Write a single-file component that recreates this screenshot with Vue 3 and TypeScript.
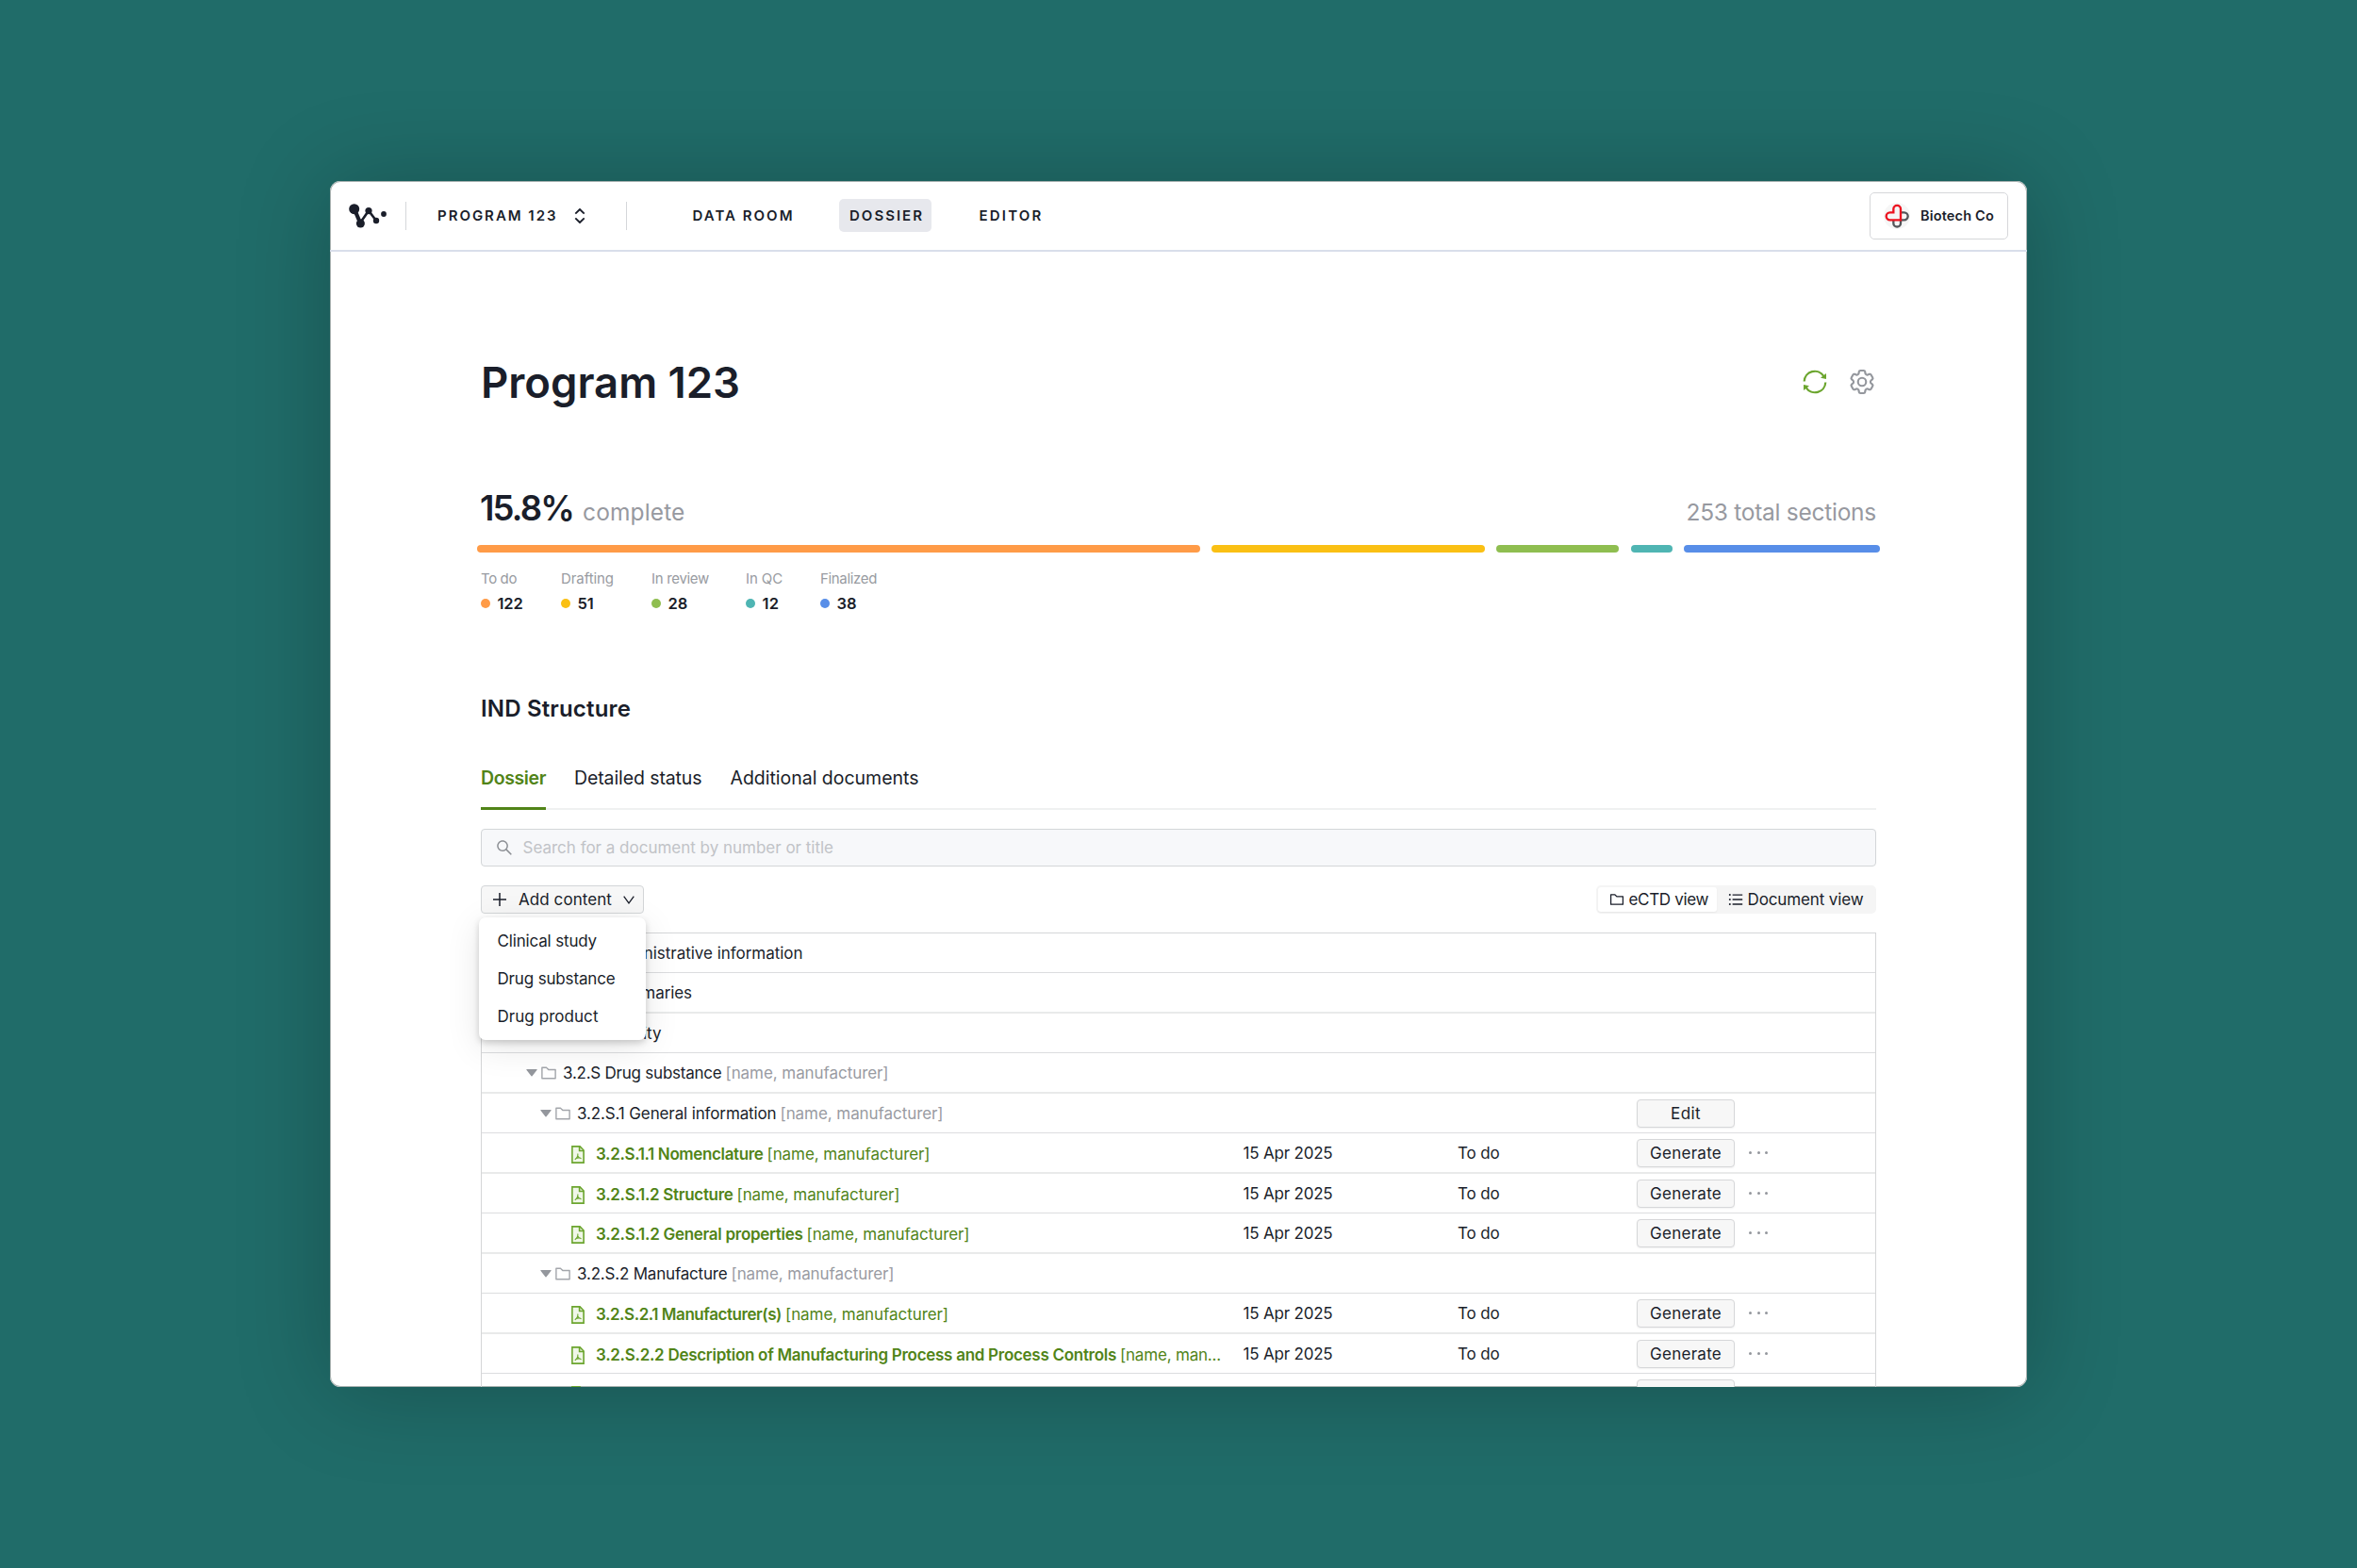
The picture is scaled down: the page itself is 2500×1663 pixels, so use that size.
<script setup lang="ts">
import type { Directive } from 'vue'

/** Tracks a text run so that it takes up the given width in pixels. */
const vTrack: Directive<HTMLElement, number | undefined> = {
  mounted(el, { value }) {
    const count = el.textContent?.length ?? 0
    if (!value || !count) return
    const range = document.createRange()
    range.selectNodeContents(el)
    const natural = range.getBoundingClientRect().width
    el.style.letterSpacing = `${(value - natural) / count}px`
  },
}

interface Status {
  label: string
  count: number
  color: string
  bar: number
  labelWidth: number
  countWidth: number
  column: number
}

interface Row {
  kind: 'module' | 'folder' | 'doc'
  level: number
  title: string
  width: number
  suffix?: string
  suffixWidth?: number
  action?: 'Edit' | 'Generate'
}

const statuses: Status[] = [
  { label: 'To do', count: 122, color: '#ff9b47', bar: 766.5, labelWidth: 38, countWidth: 27, column: 85 },
  { label: 'Drafting', count: 51, color: '#fac014', bar: 290, labelWidth: 56, countWidth: 17, column: 96 },
  { label: 'In review', count: 28, color: '#8fbe50', bar: 130.5, labelWidth: 61, countWidth: 21, column: 100 },
  { label: 'In QC', count: 12, color: '#4fb5b3', bar: 44, labelWidth: 39, countWidth: 18, column: 79 },
  { label: 'Finalized', count: 38, color: '#588ee8', bar: 208, labelWidth: 60, countWidth: 21, column: 80 },
]

const menu = [
  { label: 'Clinical study', width: 105.5 },
  { label: 'Drug substance', width: 125 },
  { label: 'Drug product', width: 107 },
]

const suffix = '[name, manufacturer]'

const rows: Row[] = [
  { kind: 'module', level: 0, title: 'Module 1 Administrative information', width: 286 },
  { kind: 'module', level: 0, title: 'Module 2 Summaries', width: 168.5 },
  { kind: 'module', level: 0, title: 'Module 3 Quality', width: 136 },
  { kind: 'folder', level: 2, title: '3.2.S Drug substance', width: 168.5, suffix, suffixWidth: 173 },
  { kind: 'folder', level: 3, title: '3.2.S.1 General information', width: 211.5, suffix, suffixWidth: 173, action: 'Edit' },
  { kind: 'doc', level: 4, title: '3.2.S.1.1 Nomenclature', width: 177.5, suffix, suffixWidth: 173, action: 'Generate' },
  { kind: 'doc', level: 4, title: '3.2.S.1.2 Structure', width: 145.5, suffix, suffixWidth: 173, action: 'Generate' },
  { kind: 'doc', level: 4, title: '3.2.S.1.2 General properties', width: 219.5, suffix, suffixWidth: 173, action: 'Generate' },
  { kind: 'folder', level: 3, title: '3.2.S.2 Manufacture', width: 159.5, suffix, suffixWidth: 173 },
  { kind: 'doc', level: 4, title: '3.2.S.2.1 Manufacturer(s)', width: 197, suffix, suffixWidth: 173, action: 'Generate' },
  { kind: 'doc', level: 4, title: '3.2.S.2.2 Description of Manufacturing Process and Process Controls', width: 552, suffix: '[name, man...', suffixWidth: 107, action: 'Generate' },
  { kind: 'doc', level: 4, title: '3.2.S.2.3 Control of Materials', width: 230, suffix, suffixWidth: 173, action: 'Generate' },
]

const folderPath =
  'M880 298.4H521L403.7 186.2a8.15 8.15 0 00-5.5-2.2H144c-17.7 0-32 14.3-32 32v592c0 17.7 14.3 32 32 32h736c17.7 0 32-14.3 32-32V330.4c0-17.7-14.3-32-32-32zM840 768H184V256h188.5l119.6 114.4H840V768z'
</script>

<template>
  <div class="stage">
    <div class="window">
      <header class="topbar">
        <svg class="logo" viewBox="0 0 40 26">
          <path class="link-a" d="M6 6 12.3 21" />
          <path class="link-b" d="M12.3 20 21 7.5 29 18" />
          <circle cx="5.7" cy="5.7" r="5.5" />
          <circle cx="12.4" cy="21" r="4.5" />
          <circle cx="21" cy="7.6" r="3.6" />
          <circle cx="29" cy="18" r="3.2" />
          <circle cx="37" cy="11" r="2.9" />
        </svg>
        <i class="rule rule-logo"></i>
        <span v-track="127.5" class="nav-text program">PROGRAM 123</span>
        <svg class="sorter" viewBox="0 0 12 16"><path d="M1.3 5.6 6 1l4.7 4.6M1.3 10.4 6 15l4.7-4.6" /></svg>
        <i class="rule rule-nav"></i>
        <nav>
          <span class="nav-item"><span v-track="108" class="nav-text">DATA ROOM</span></span>
          <span class="nav-item active"><span v-track="79" class="nav-text">DOSSIER</span></span>
          <span class="nav-item"><span v-track="68" class="nav-text">EDITOR</span></span>
        </nav>
        <button class="org">
          <svg class="org-logo" viewBox="354 104 84 84">
            <circle cx="396" cy="146" r="42" fill="#f6f6f6" />
            <path d="M408 135h11a12 12 0 0 1 0 24h-11M385 159v10a11.5 11.5 0 0 0 23 0v-10" stroke="#55565a" />
            <path d="M408 159V124a11.5 11.5 0 0 0-23 0v11h-11a12 12 0 0 0 0 24z" stroke="#ec1320" />
          </svg>
          <span v-track="78" class="org-name">Biotech Co</span>
        </button>
      </header>

      <main>
        <div class="title-row">
          <h1 v-track="275">Program 123</h1>
          <svg class="sync" viewBox="0 0 26 26">
            <path d="M1.7 12.5a11.2 11.2 0 0 1 20.6-5.6M24.3 13.5a11.2 11.2 0 0 1-20.6 5.6" />
            <path class="tip" d="M25 4v6l-6-1.3zM1 22v-6l6 1.3z" />
          </svg>
          <svg class="gear" viewBox="0 0 24 24">
            <path d="M9.594 3.94c.09-.542.56-.94 1.11-.94h2.593c.55 0 1.02.398 1.11.94l.213 1.281c.063.374.313.686.645.87.074.04.147.083.22.127.325.196.72.257 1.075.124l1.217-.456a1.125 1.125 0 0 1 1.37.49l1.296 2.247a1.125 1.125 0 0 1-.26 1.431l-1.003.827c-.293.241-.438.613-.43.992a7.723 7.723 0 0 1 0 .255c-.008.378.137.75.43.991l1.004.827c.424.35.534.955.26 1.43l-1.298 2.247a1.125 1.125 0 0 1-1.369.491l-1.217-.456c-.355-.133-.75-.072-1.076.124a6.47 6.47 0 0 1-.22.128c-.331.183-.581.495-.644.869l-.213 1.281c-.09.543-.56.94-1.11.94h-2.594c-.55 0-1.019-.398-1.11-.94l-.213-1.281c-.062-.374-.312-.686-.644-.87a6.52 6.52 0 0 1-.22-.127c-.325-.196-.72-.257-1.076-.124l-1.217.456a1.125 1.125 0 0 1-1.369-.49l-1.297-2.247a1.125 1.125 0 0 1 .26-1.431l1.004-.827c.292-.24.437-.613.43-.991a6.932 6.932 0 0 1 0-.255c.007-.38-.138-.751-.43-.992l-1.004-.827a1.125 1.125 0 0 1-.26-1.43l1.297-2.247a1.125 1.125 0 0 1 1.37-.491l1.216.456c.356.133.751.072 1.076-.124.072-.044.146-.086.22-.128.332-.183.582-.495.644-.869l.214-1.28Z" />
            <circle cx="12" cy="12" r="3.2" />
          </svg>
        </div>

        <div class="summary">
          <strong v-track="99" class="percent">15.8%</strong>
          <span v-track="108.5" class="muted">complete</span>
          <span v-track="201.5" class="muted total">253 total sections</span>
        </div>

        <div class="bars">
          <i v-for="s in statuses" :key="s.label" :style="{ width: s.bar + 'px', background: s.color }"></i>
        </div>

        <div class="legend">
          <div v-for="s in statuses" :key="s.label" :style="{ width: s.column + 'px' }">
            <span v-track="s.labelWidth" class="legend-label">{{ s.label }}</span>
            <span class="legend-value">
              <i :style="{ background: s.color }"></i>
              <b v-track="s.countWidth">{{ s.count }}</b>
            </span>
          </div>
        </div>

        <h2><span v-track="159">IND Structure</span></h2>

        <div class="tabs">
          <span class="tab current"><span v-track="69">Dossier</span></span>
          <span class="tab"><span v-track="135.5">Detailed status</span></span>
          <span class="tab"><span v-track="200">Additional documents</span></span>
        </div>

        <div class="search">
          <svg viewBox="0 0 1024 1024">
            <path d="M909.6 854.5L649.9 594.8C690.2 542.7 712 479 712 412c0-80.2-31.3-155.4-87.9-212.1-56.6-56.7-132-87.9-212.1-87.9s-155.5 31.3-212.1 87.9C143.2 256.5 112 331.8 112 412c0 80.1 31.3 155.5 87.9 212.1C256.5 680.8 331.8 712 412 712c67 0 130.6-21.8 182.7-62l259.7 259.6a8.2 8.2 0 0011.6 0l43.6-43.5a8.2 8.2 0 000-11.6zM570.4 570.4C528 612.7 471.8 636 412 636s-116-23.3-158.4-65.6C211.3 528 188 471.8 188 412s23.3-116.1 65.6-158.4C296 211.3 352.2 188 412 188s116.1 23.2 158.4 65.6S636 352.2 636 412s-23.3 116.1-65.6 158.4z" />
          </svg>
          <span v-track="329.5">Search for a document by number or title</span>
        </div>

        <div class="toolbar">
          <div class="add-wrap">
            <button class="add">
              <svg class="plus" viewBox="0 0 14 14"><path d="M7 0v14M0 7h14" /></svg>
              <span v-track="99">Add content</span>
              <svg class="down" viewBox="0 0 12 9"><path d="M.7.7 6 7.8 11.3.7" /></svg>
            </button>
            <div class="menu">
              <div v-for="m in menu" :key="m.label"><span v-track="m.width">{{ m.label }}</span></div>
            </div>
          </div>
          <div class="toggle">
            <span class="option selected">
              <svg viewBox="0 0 1024 1024"><path :d="folderPath" /></svg>
              <span v-track="84.5">eCTD view</span>
            </span>
            <span class="option">
              <svg viewBox="0 0 1024 1024">
                <path d="M320 192h600v72H320zM320 476h600v72H320zM320 760h600v72H320z" />
                <circle cx="160" cy="228" r="56" /><circle cx="160" cy="512" r="56" /><circle cx="160" cy="796" r="56" />
              </svg>
              <span v-track="123">Document view</span>
            </span>
          </div>
        </div>

        <div class="table">
          <div v-for="(r, i) in rows" :key="i" class="row">
            <div class="cell name" :class="[r.kind, 'level-' + r.level]">
              <template v-if="r.kind !== 'doc'">
                <svg class="caret" viewBox="0 0 12 8"><path d="M.8 0h10.4a.5.5 0 0 1 .4.8L6.5 7.2a.7.7 0 0 1-1 0L.4.8A.5.5 0 0 1 .8 0z" /></svg>
                <svg class="folder-icon" viewBox="0 0 1024 1024"><path :d="folderPath" /></svg>
              </template>
              <svg v-else class="file" viewBox="0 0 14 19">
                <path class="sheet" d="M.9.9h8.2l4 4.1v13.1H.9z" />
                <path d="M8.6.9v4.6h4.5" />
                <path class="pdf" d="M6.8 8.5c.5 2.3-.8 4.6-3 6.3M7 11.3c.8 1.5 2 2.2 3.6 2.5M4.8 13.6c1.8-.8 3.5-1 5-.4" />
              </svg>
              <span v-track="r.width" class="title">{{ r.title }}</span>
              <span v-if="r.suffix" v-track="r.suffixWidth" class="suffix">{{ r.suffix }}</span>
            </div>
            <div class="cell date"><span v-if="r.kind === 'doc'" v-track="95">15 Apr 2025</span></div>
            <div class="cell state"><span v-if="r.kind === 'doc'" v-track="44.5">To do</span></div>
            <div class="cell actions">
              <button v-if="r.action" class="action"><span v-track="r.action === 'Edit' ? 32 : 76">{{ r.action }}</span></button>
              <span v-if="r.kind === 'doc'" class="more"><i></i><i></i><i></i></span>
            </div>
          </div>
        </div>
      </main>
    </div>
  </div>
</template>

<style>
body {
  margin: 0;
  background: #206c69;
}
</style>

<style scoped>
* {
  box-sizing: border-box;
}
svg {
  display: block;
  flex: none;
  fill: none;
}
span,
strong {
  white-space: nowrap;
}
button {
  font: inherit;
  color: inherit;
  padding: 0;
}
.stage {
  width: 2500px;
  height: 1663px;
  padding: 192px 350px;
  overflow: hidden;
  background: #206c69;
  font-family: Inter, 'Liberation Sans', sans-serif;
  font-size: 17px;
  color: #1a1e2a;
}
.window {
  height: 1279px;
  overflow: hidden;
  border-radius: 11px;
  background: #fff;
  box-shadow: inset 0 0 0 1px #a9b2b1, 0 4px 100px rgba(0, 0, 0, 0.24);
}

.topbar {
  display: flex;
  align-items: center;
  height: 75px;
  padding: 0 20px;
  border-bottom: 2px solid #d9deea;
}
.logo {
  width: 40px;
  height: 26px;
  fill: #1a1e2a;
}
.link-a,
.link-b {
  fill: none;
  stroke: #1a1e2a;
}
.link-a {
  stroke-width: 4.2;
}
.link-b {
  stroke-width: 2.6;
}
.rule {
  width: 1px;
  height: 30px;
  background: #d5d7da;
}
.rule-logo {
  margin-left: 20px;
}
.rule-nav {
  margin-left: 43px;
}
.nav-text {
  display: block;
  font-size: 15px;
  font-weight: 600;
  line-height: 21px;
}
.program {
  width: 127px;
  margin-left: 33px;
}
.sorter {
  width: 12px;
  height: 16px;
  margin-left: 18px;
  stroke: #1a1e2a;
  stroke-width: 1.9;
}
nav {
  display: flex;
  margin-left: 58.5px;
  gap: 39.5px;
}
.nav-item {
  height: 35px;
  padding: 7px 8px 0 11px;
  border-radius: 5px;
}
.nav-item.active {
  background: #e7e8ed;
}
.org {
  display: flex;
  align-items: center;
  width: 147px;
  height: 50px;
  margin-left: auto;
  padding-left: 14px;
  border: 1px solid #d6d7da;
  border-radius: 5px;
  background: #fff;
}
.org-logo {
  width: 28px;
  height: 28px;
  stroke-width: 7;
}
.org-name {
  margin-left: 11px;
  font-size: 14.5px;
  font-weight: 600;
}

main {
  width: 1480px;
  margin: 0 160px;
}
.title-row {
  display: flex;
  align-items: center;
  height: 60px;
  margin-top: 109px;
}
h1 {
  flex: 1;
  margin: 0;
  font-size: 45.5px;
  font-weight: 600;
  line-height: 60px;
}
.sync {
  width: 26px;
  height: 26px;
  margin: -2px 21px 0 0;
  stroke: #6ba52e;
  stroke-width: 2.2;
}
.sync .tip {
  fill: #6ba52e;
  stroke: none;
}
.gear {
  width: 32px;
  height: 32px;
  margin: -2px -1px 0 0;
  stroke: #94979d;
  stroke-width: 1.6;
}

.summary {
  display: flex;
  align-items: baseline;
  height: 50px;
  margin-top: 78px;
}
.percent {
  width: 109px;
  margin-left: -1px;
  font-size: 36.5px;
  font-weight: 600;
  line-height: 50px;
}
.muted {
  font-size: 24.5px;
  color: #9799a0;
}
.total {
  margin-left: auto;
}

.bars {
  display: flex;
  gap: 12.2px;
  width: 1490px;
  margin: 14px -6px 0 -4px;
}
.bars i {
  flex: none;
  height: 8px;
  border-radius: 4px;
}

.legend {
  display: flex;
  margin-top: 18px;
}
.legend-label {
  display: block;
  font-size: 15px;
  line-height: 20px;
  color: #989ba1;
}
.legend-value {
  display: flex;
  align-items: center;
  height: 20px;
  margin-top: 6px;
  font-size: 16.5px;
}
.legend-value i {
  width: 10px;
  height: 10px;
  margin-right: 7.5px;
  border-radius: 50%;
}
.legend-value b {
  font-weight: 600;
}

h2 {
  height: 40px;
  margin: 82px 0 0;
  font-size: 24px;
  font-weight: 600;
  line-height: 40px;
}
.tabs {
  display: flex;
  gap: 30px;
  height: 51px;
  margin-top: 36px;
  border-bottom: 2px solid #eff1f1;
  font-size: 19.5px;
}
.tab {
  height: 51px;
  line-height: 34px;
}
.tab.current {
  border-bottom: 3px solid #518418;
  color: #518418;
  font-weight: 600;
}
.search {
  display: flex;
  align-items: center;
  height: 40px;
  margin-top: 20px;
  padding-left: 14px;
  border: 1px solid #d3d6d8;
  border-radius: 4px;
  background: #f7f8fa;
  color: #c1c3c7;
}
.search svg {
  width: 20px;
  height: 20px;
  margin-right: 9.5px;
  fill: #8c8f94;
}

.toolbar {
  display: flex;
  justify-content: space-between;
  height: 30px;
  margin-top: 20px;
}
.add-wrap {
  position: relative;
}
.add {
  display: flex;
  align-items: center;
  width: 173px;
  height: 30px;
  padding-left: 12px;
  border: 1px solid #d3d6d8;
  border-radius: 4px;
  background: #f7f7f7;
}
.plus {
  width: 14px;
  height: 14px;
  margin-right: 13px;
  stroke: #1a1e2a;
  stroke-width: 1.5;
}
.down {
  width: 12px;
  height: 9px;
  margin-left: 11.5px;
  stroke: #1a1e2a;
  stroke-width: 1.3;
}
.menu {
  position: absolute;
  z-index: 1;
  top: 34px;
  left: -2px;
  width: 177px;
  height: 130px;
  padding: 5px 19.5px;
  border-radius: 7px;
  background: #fff;
  box-shadow: 0 3px 7px rgba(0, 0, 0, 0.18), 0 8px 36px rgba(0, 0, 0, 0.1);
}
.menu div {
  height: 40px;
  line-height: 40px;
}
.toggle {
  display: flex;
  width: 297px;
  padding: 2px;
  border-radius: 5px;
  background: #f5f5f5;
}
.option {
  display: flex;
  align-items: center;
  height: 26px;
  padding-left: 10.5px;
  border-radius: 3px;
}
.option.selected {
  width: 126px;
  background: #fff;
  box-shadow: 0 1px 2px rgba(0, 0, 0, 0.06);
}
.option svg {
  width: 18px;
  height: 18px;
  margin-right: 4px;
  fill: #1a1e2a;
}

.table {
  margin-top: 20px;
  border: 1px solid #d5d6d8;
  border-bottom: 0;
}
.row {
  display: flex;
  height: 42px;
  border-bottom: 1px solid #dcdddf;
}
.row:nth-child(even) {
  height: 43px;
  border-bottom: 2px solid #e9eaea;
}
.cell {
  display: flex;
  align-items: center;
}
.name {
  width: 807.5px;
}
.name.doc {
  padding-top: 2px;
}
.level-0 {
  padding-left: 16px;
}
.level-2 {
  padding-left: 47px;
}
.level-3 {
  padding-left: 62px;
}
.level-4 {
  padding-left: 95px;
}
.caret {
  width: 12px;
  height: 8px;
  margin-right: 2px;
  fill: #94979d;
}
.folder-icon {
  width: 20px;
  height: 20px;
  margin-right: 5px;
  fill: #a3a6ab;
}
.module .folder-icon {
  margin-right: 4.5px;
}
.file {
  width: 14px;
  height: 19px;
  margin: 1px 12px 0 0;
  stroke: #6ba52e;
  stroke-width: 1.6;
}
.file .sheet {
  fill: #f0f7e8;
}
.file .pdf {
  stroke-width: 1.1;
}
.suffix {
  margin-left: 4px;
  color: #999ba2;
}
.doc,
.doc .suffix {
  color: #518418;
}
.doc .title {
  font-weight: 600;
}
.date {
  width: 227.5px;
}
.state {
  width: 190px;
}
.action {
  width: 104px;
  height: 30px;
  border: 1px solid #d6d7d9;
  border-radius: 4px;
  background: #f7f7f7;
  box-shadow: 0 1px 2px rgba(0, 0, 0, 0.06);
}
.more {
  display: flex;
  gap: 5.5px;
  margin-left: 15px;
}
.more i {
  width: 3px;
  height: 3px;
  border-radius: 50%;
  background: #94979d;
}
</style>
